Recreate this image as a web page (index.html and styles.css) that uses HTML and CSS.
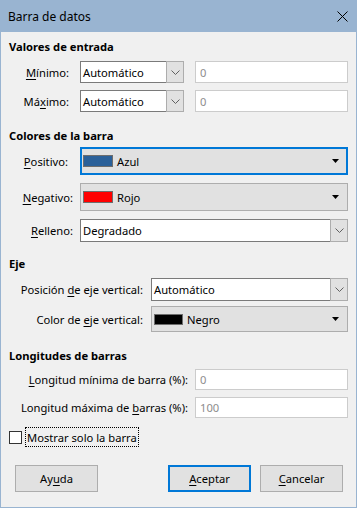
FILE: index.html
```html
<!DOCTYPE html>
<html lang="es">
<head>
  <meta charset="UTF-8">
  <title>Barra de datos</title>
  <link rel="stylesheet" href="styles.css">
</head>
<body>
  <div class="dialog">
    <div class="titlebar">
      <span class="title">Barra de datos</span>
      <svg class="close" width="11" height="11" viewBox="0 0 11 11">
        <path d="M0.5 0.5L10.5 10.5M10.5 0.5L0.5 10.5" stroke="#000" stroke-width="1" fill="none"/>
      </svg>
    </div>

    <div class="content">
      <!-- Valores de entrada -->
      <div class="group group-input">
        <h2 class="group-title">Valores de entrada</h2>
        <div class="grid grid-input">
          <span class="lbl"><u>M</u>ínimo:</span>
          <div class="combo">
            <span class="combo-text">Automático</span>
            <span class="combo-btn"><svg width="9" height="5" viewBox="0 0 9 5"><polyline points="0.5,0.5 4.5,4.5 8.5,0.5" fill="none" stroke="#606060"/></svg></span>
          </div>
          <div class="field disabled">0</div>

          <span class="lbl">Má<u>x</u>imo:</span>
          <div class="combo">
            <span class="combo-text">Automático</span>
            <span class="combo-btn"><svg width="9" height="5" viewBox="0 0 9 5"><polyline points="0.5,0.5 4.5,4.5 8.5,0.5" fill="none" stroke="#606060"/></svg></span>
          </div>
          <div class="field disabled">0</div>
        </div>
      </div>

      <!-- Colores de la barra -->
      <div class="group group-colors">
        <h2 class="group-title">Colores de la barra</h2>
        <div class="grid grid-colors">
          <span class="lbl lbl-focus"><u>P</u>ositivo:</span>
          <div class="colorbox focused">
            <span class="swatch" style="background: #2a6099;"></span>
            <span class="color-name">Azul</span>
            <svg class="arrow" width="7" height="4" viewBox="0 0 7 4"><polygon points="0,0 7,0 3.5,4" fill="#000"/></svg>
          </div>

          <span class="lbl"><u>N</u>egativo:</span>
          <div class="colorbox">
            <span class="swatch" style="background: #ff0000;"></span>
            <span class="color-name">Rojo</span>
            <svg class="arrow" width="7" height="4" viewBox="0 0 7 4"><polygon points="0,0 7,0 3.5,4" fill="#000"/></svg>
          </div>

          <span class="lbl"><u>R</u>elleno:</span>
          <div class="combo combo-tall">
            <span class="combo-text">Degradado</span>
            <span class="combo-btn"><svg width="9" height="5" viewBox="0 0 9 5"><polyline points="0.5,0.5 4.5,4.5 8.5,0.5" fill="none" stroke="#606060"/></svg></span>
          </div>
        </div>
      </div>

      <!-- Eje -->
      <div class="group group-axis">
        <h2 class="group-title">Eje</h2>
        <div class="grid grid-axis">
          <span class="lbl">Posición <u>d</u>e eje vertical:</span>
          <div class="combo combo-tall">
            <span class="combo-text">Automático</span>
            <span class="combo-btn"><svg width="9" height="5" viewBox="0 0 9 5"><polyline points="0.5,0.5 4.5,4.5 8.5,0.5" fill="none" stroke="#606060"/></svg></span>
          </div>

          <span class="lbl">Color de <u>e</u>je vertical:</span>
          <div class="colorbox colorbox-short">
            <span class="swatch" style="background: #000000;"></span>
            <span class="color-name">Negro</span>
            <svg class="arrow" width="7" height="4" viewBox="0 0 7 4"><polygon points="0,0 7,0 3.5,4" fill="#000"/></svg>
          </div>
        </div>
      </div>

      <!-- Longitudes de barras -->
      <div class="group group-length">
        <h2 class="group-title">Longitudes de barras</h2>
        <div class="grid grid-length">
          <span class="lbl"><u>L</u>ongitud mínima de barra (%):</span>
          <div class="field disabled">0</div>

          <span class="lbl">Longitud máxima de <u>b</u>arras (%):</span>
          <div class="field disabled">100</div>
        </div>
      </div>

      <div class="check-row">
        <span class="checkbox"></span>
        <span class="check-label">Mostrar solo la barra</span>
      </div>

      <div class="buttons">
        <button class="btn">Ay<u>u</u>da</button>
        <div class="btn-group">
          <button class="btn btn-default"><u>A</u>ceptar</button>
          <button class="btn"><u>C</u>ancelar</button>
        </div>
      </div>
    </div>
  </div>
</body>
</html>
```

FILE: styles.css
```css
/* Dialog styles */
html {
  background-color: #f0f0f0;
}

body {
  margin: 0;
  padding: 0;
  font-family: "Noto Sans", "DejaVu Sans", sans-serif;
  font-size: 11.2px;
  color: #000;
}

u {
  text-decoration-thickness: 1px;
  text-underline-offset: 2px;
}

.dialog {
  width: 357px;
  height: 508px;
  box-sizing: border-box;
  border: 1px solid #99b4d1;
  border-top: none;
  background-color: #f0f0f0;
  display: flex;
  flex-direction: column;
}

.titlebar {
  height: 32px;
  flex-shrink: 0;
  background-color: #99b4d1;
  display: flex;
  align-items: center;
  justify-content: space-between;
  padding: 0 9px 0 8px;
  margin: 0 -1px;
}

.title {
  font-size: 12px;
}

.close {
  display: block;
  margin-top: 1px;
}

.content {
  padding: 7px 8px 0 8px;
  display: flex;
  flex-direction: column;
}

.group-title {
  margin: 0;
  font-size: 11.2px;
  font-weight: bold;
  line-height: 16px;
  height: 16px;
}

.grid {
  display: grid;
  align-items: center;
}

.lbl {
  text-align: right;
  white-space: nowrap;
}

/* section spacing */
.group-input .grid {
  margin-top: 6px;
  grid-template-columns: 60px 104px 1fr;
  grid-auto-rows: 22px;
  column-gap: 11px;
  row-gap: 7px;
}

.group-colors {
  margin-top: 16px;
}

.group-colors .grid {
  margin-top: 3px;
  grid-template-columns: 64px 1fr;
  column-gap: 7px;
  row-gap: 8px;
}

.lbl-focus {
  padding-right: 5px;
}

.group-axis {
  margin-top: 14px;
}

.group-axis .grid {
  margin-top: 6px;
  grid-template-columns: 134px 1fr;
  column-gap: 8px;
  row-gap: 5px;
}

.group-length {
  margin-top: 16px;
}

.group-length .grid {
  margin-top: 5px;
  grid-template-columns: 179px 1fr;
  grid-auto-rows: 21px;
  column-gap: 7px;
  row-gap: 7px;
}

/* widgets */
.combo {
  height: 22px;
  box-sizing: border-box;
  display: flex;
  border: 1px solid #7a7a7a;
  background-color: #fff;
}

.combo-tall {
  height: 23px;
}

.combo-text {
  flex: 1;
  padding-left: 2px;
  display: flex;
  align-items: center;
}

.combo-btn {
  width: 16px;
  margin: -1px -1px -1px 0;
  border: 1px solid #adadad;
  background-color: #e1e1e1;
  display: flex;
  align-items: center;
  justify-content: center;
}

.field {
  height: 100%;
  box-sizing: border-box;
  border: 1px solid #cccccc;
  background-color: #fff;
  padding-left: 4px;
  display: flex;
  align-items: center;
}

.field.disabled {
  color: #8d8d8d;
}

.colorbox {
  height: 28px;
  box-sizing: border-box;
  border: 1px solid #adadad;
  background-color: #e1e1e1;
  display: flex;
  align-items: center;
  padding: 0 8px 0 2px;
}

.colorbox.focused {
  border: 2px solid #0078d7;
  padding-left: 1px;
  padding-right: 7px;
}

.colorbox-short {
  height: 26px;
}

.swatch {
  width: 30px;
  height: 12px;
  box-sizing: border-box;
  border: 1px solid #6d6d6d;
}

.colorbox-short .swatch {
  width: 29px;
  height: 11px;
}

.color-name {
  flex: 1;
  margin-left: 4px;
}

.arrow {
  display: block;
}

/* checkbox */
.check-row {
  margin-top: 9px;
  height: 20px;
  display: flex;
  align-items: center;
}

.checkbox {
  width: 13px;
  height: 13px;
  box-sizing: border-box;
  border: 1px solid #333;
  background-color: #fff;
}

.check-label {
  margin-left: 3px;
  height: 20px;
  box-sizing: border-box;
  border: 1px dotted #000;
  padding: 0 1px;
  display: flex;
  align-items: center;
}

/* buttons */
.buttons {
  margin-top: 18px;
  display: flex;
  justify-content: space-between;
  padding: 0 5px 0 6px;
}

.btn-group {
  display: flex;
  gap: 9px;
}

.btn {
  width: 83px;
  height: 27px;
  box-sizing: border-box;
  font-family: inherit;
  font-size: 11.2px;
  color: #000;
  background-color: #e1e1e1;
  border: 1px solid #adadad;
  padding: 0;
}

.btn-default {
  border: 2px solid #0078d7;
}
```
